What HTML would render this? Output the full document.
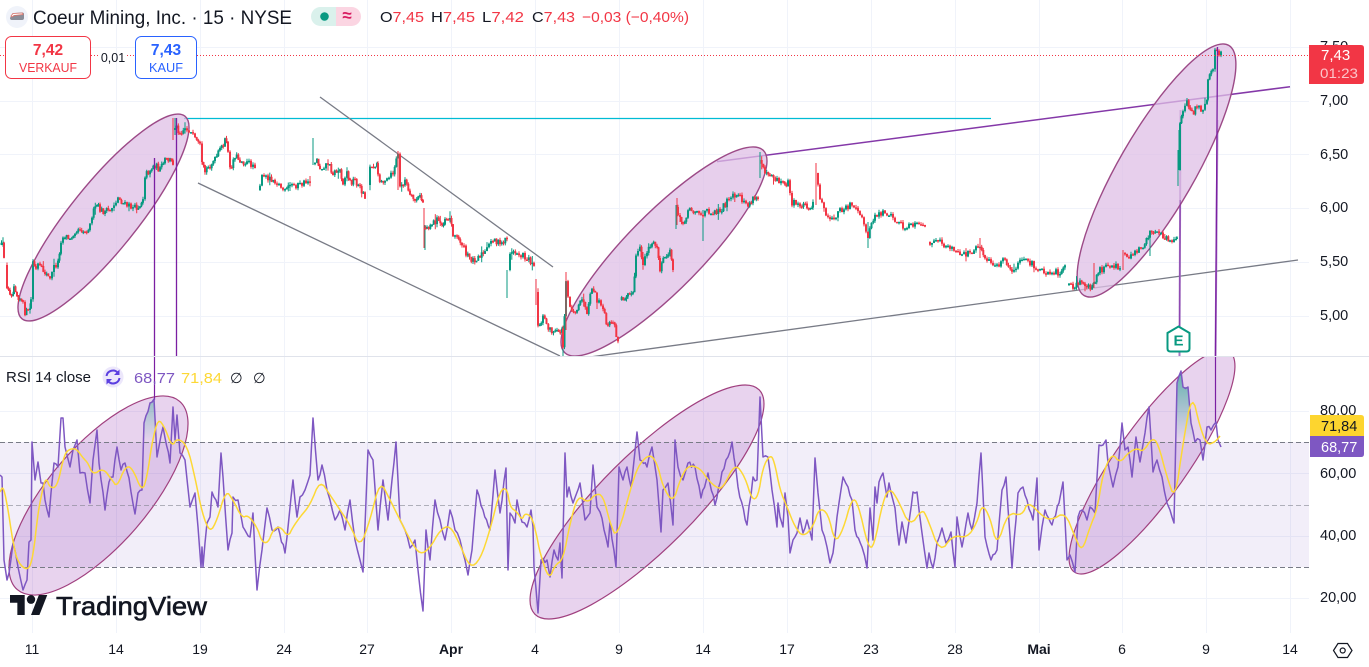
<!DOCTYPE html>
<html><head><meta charset="utf-8"><style>
html,body{margin:0;padding:0;background:#fff;width:1369px;height:667px;overflow:hidden}
svg{display:block}
text{font-family:"Liberation Sans",sans-serif;fill:#131722}
.a{font-size:14.5px}
.t{font-size:14px;text-anchor:middle}
</style></head><body>
<svg id="s" width="1369" height="667" viewBox="0 0 1369 667" xmlns="http://www.w3.org/2000/svg">
<defs>
<clipPath id="p1"><rect x="0" y="0" width="1309" height="356"/></clipPath>
<clipPath id="p2"><rect x="0" y="357" width="1309" height="276"/></clipPath>
<linearGradient id="g" x1="0" y1="0" x2="0" y2="1"><stop offset="0" stop-color="#089981" stop-opacity=".6"/><stop offset="1" stop-color="#089981" stop-opacity="0"/></linearGradient>
</defs>
<rect width="1369" height="667" fill="#fff"/>
<!-- grid -->
<path d="M32.5 0V633M116.5 0V633M200.5 0V633M284.5 0V633M367.5 0V633M451.5 0V633M535.5 0V633M619.5 0V633M703.5 0V633M787.5 0V633M871.5 0V633M955.5 0V633M1039.5 0V633M1122.5 0V633M1206.5 0V633M1290.5 0V633" stroke="#f0f3fa" fill="none"/>
<path d="M0 47.5H1309M0 101.5H1309M0 154.5H1309M0 208.5H1309M0 262.5H1309M0 316.5H1309M0 411.5H1309M0 473.5H1309M0 536.5H1309M0 598.5H1309" stroke="#f0f3fa" fill="none"/>
<rect x="0" y="356" width="1369" height="1" fill="#e0e3eb"/>
<!-- RSI band -->
<rect x="0" y="442" width="1309" height="125" fill="#7e57c2" fill-opacity=".1"/>
<!-- trend lines -->
<g clip-path="url(#p1)" fill="none">
<path d="M184 118.5H991" stroke="#00bcd4" stroke-width="1.2"/>
<path d="M320 97L553 267M198 183L560 356M590 357L1298 260" stroke="#787b86" stroke-width="1.3"/>
<path d="M717 161.6L1290 86.7" stroke="#8438a8" stroke-width="1.5"/>
<path d="M1180.5 110L1179.5 356" stroke="#a678c4" stroke-width="2"/>
<path d="M1217.500 120L1215.500 356" stroke="#b48ccd" stroke-width="2"/>
<g fill="#dfbfe6" fill-opacity=".75" stroke="#9c4a87" stroke-width="1.4">
<ellipse cx="103.5" cy="217.5" rx="130" ry="33.4" transform="rotate(-51.2 103.5 217.5)"/>
<ellipse cx="664" cy="251.5" rx="141.7" ry="38.2" transform="rotate(-45.5 664 251.5)"/>
<ellipse cx="1156.5" cy="170.5" rx="144.5" ry="38" transform="rotate(-60 1156.5 170.5)"/>
</g>
<path id="cw" stroke-width="1"/><path id="cr" stroke-width="1"/>
<path d="M154.5 158V356M176.5 118V356M1217.5 47L1215.5 356" stroke="#7b1fa2" stroke-width="1.3"/>
<path d="M1180.2 200L1179.5 326" stroke="#7b1fa2" stroke-opacity=".6" stroke-width="1"/>
</g>
<!-- price line -->
<path d="M0 55.5H5M91 55.5H100M127 55.5H135M197 55.5H1309" stroke="#f23645" stroke-dasharray="1 2" fill="none"/>
<!-- E marker -->
<path d="M1178.5 326.5L1189.500 333V348.500Q1189.500 351.500 1186.500 351.500H1170.500Q1167.500 351.500 1167.500 348.500V333Z" fill="#fff" stroke="#089981" stroke-width="2"/>
<text x="1178.5" y="345.500" text-anchor="middle" font-size="15" font-weight="700" style="fill:#089981">E</text>
<!-- RSI -->
<g clip-path="url(#p2)" fill="none">
<ellipse cx="98.5" cy="495.5" rx="124.3" ry="49.7" transform="rotate(-49.2 98.5 495.5)" fill="#8e24aa" fill-opacity=".2" stroke="#a0407f" stroke-width="1.2"/>
<ellipse cx="647" cy="502" rx="158.6" ry="47" transform="rotate(-45 647 502)" fill="#8e24aa" fill-opacity=".2" stroke="#a0407f" stroke-width="1.2"/>
<ellipse cx="1152" cy="462" rx="134.7" ry="35.7" transform="rotate(-54.8 1152 462)" fill="#8e24aa" fill-opacity=".2" stroke="#a0407f" stroke-width="1.2"/>
<path d="M0 442.5H1309M0 567.5H1309" stroke="#787b86" stroke-dasharray="5 3"/>
<path d="M0 505.5H1309" stroke="#787b86" stroke-opacity=".55" stroke-dasharray="5 3"/>
<path d="M144 423L150 403L154 399L157 442H144ZM1177 383L1181 371L1183 387L1188 387L1191 423L1194 442H1177Z" fill="url(#g)"/>
<path d="M154.5 357V400M1215.5 357V422" stroke="#7b1fa2" stroke-width="1.2"/>
<polyline id="rp" stroke="#7e57c2" stroke-width="1.5" stroke-linejoin="round" points="0,475 2,477 4,560 7,580 9,573 13,543 18,567 23,590 27,580 29,542 31,540 32,442 35,480 38,462 41,483 43,483 45,500 49,517 51,493 54,463 58,467 61,418 63,418 65,447 70,467 73,450 77,440 80,473 85,473 90,503 93,460 97,430 99,463 105,510 109,482 113,477 117,447 121,470 125,463 129,478 135,514 138,493 142,490 144,423 150,403 154,399 157,457 163,427 170,463 173,407 175,440 177,415 180,453 185,460 190,507 195,493 198,527 201,567 202,547 203,567 207,523 210,517 212,492 218,507 221,453 223,477 228,550 232,533 233,497 238,500 243,527 250,537 253,513 257,590 262,550 267,508 272,530 278,527 285,553 287,537 293,480 297,517 300,497 305,490 310,475 313,418 318,480 322,465 327,490 330,500 335,520 340,510 345,530 350,500 355,540 360,560 363,572 368,450 373,460 378,530 383,480 388,520 392,480 396,442 400,520 405,530 410,548 415,540 418,570 423,611 426,530 430,560 435,500 440,520 445,540 450,510 455,530 460,540 465,560 468,575 472,550 477,490 483,510 490,530 495,470 500,513 506,468 508,570 510,513 515,523 517,500 522,522 527,527 531,510 533,527 534,567 538,613 541,560 547,560 550,577 554,550 558,560 560,543 562,578 565,453 567,497 569,487 573,503 580,483 585,520 590,513 593,465 597,507 600,512 608,547 610,522 616,567 619,467 623,480 627,467 631,487 637,432 640,460 647,467 652,447 657,480 661,532 663,490 668,483 673,525 675,440 678,467 683,480 688,463 695,467 701,498 708,473 715,505 722,472 728,457 732,442 738,487 747,525 753,477 757,480 760,397 763,457 768,457 772,490 777,527 778,503 780,517 783,527 785,493 788,517 790,553 793,540 797,533 800,518 803,533 807,520 812,540 815,458 818,493 822,530 827,547 830,563 833,553 837,517 839,503 843,477 848,487 852,500 855,530 862,547 867,568 870,508 873,540 875,487 877,503 879,482 883,473 887,497 889,483 895,508 899,545 902,522 906,543 913,492 917,492 922,533 927,568 929,553 933,568 937,543 942,528 946,543 951,532 955,567 957,517 962,547 968,513 972,530 977,503 981,453 985,537 991,560 997,550 1002,490 1006,477 1012,568 1018,493 1023,487 1027,500 1033,520 1037,478 1039,550 1042,527 1045,510 1052,525 1059,503 1063,482 1067,560 1070,555 1075,572 1078,517 1082,510 1087,520 1090,507 1095,513 1099,445 1103,445 1106,440 1108,463 1113,487 1118,467 1122,423 1125,450 1128,447 1132,477 1136,437 1140,462 1145,433 1149,407 1153,472 1157,460 1162,477 1167,503 1170,510 1174,523 1177,383 1181,371 1183,387 1188,387 1191,423 1195,442 1200,440 1203,460 1207,427 1211,430 1216,422 1218,440 1221,447"/>
<polyline id="ry" stroke="#fdd835" stroke-width="1.5" stroke-linejoin="round" points="0,492 3,486 7,503 13,543 18,563 28,571 33,557 38,513 42,492 46,477 50,488 57,487 63,460 67,450 76,448 83,458 88,463 93,475 103,468 112,480 117,487 125,467 132,467 142,492 147,477 152,443 158,418 165,428 172,447 177,438 187,445 195,477 202,513 210,533 217,520 226,490 233,500 242,518 248,515 257,527 262,542 268,543 273,530 280,526 288,537 293,527 300,517 310,505 320,480 330,495 340,510 350,525 360,548 370,520 380,480 390,500 400,520 410,540 420,555 430,548 440,530 450,525 460,545 470,568 480,560 490,530 500,490 507,488 510,507 517,512 522,520 525,513 532,517 537,537 540,553 549,580 555,565 563,560 570,523 578,495 588,503 595,494 603,495 610,523 617,539 633,480 640,463 650,454 657,463 663,487 673,503 680,480 688,465 700,468 708,480 717,488 723,488 735,463 745,477 752,500 758,497 763,467 770,455 774,460 780,490 787,507 795,527 803,537 813,527 819,508 828,513 835,543 843,530 852,498 858,503 868,547 874,547 883,500 890,488 898,500 910,527 922,509 927,517 940,553 953,535 967,538 977,523 982,504 990,517 997,547 1008,512 1022,516 1028,501 1043,517 1052,520 1065,512 1075,537 1082,552 1090,527 1097,510 1103,473 1112,453 1120,463 1128,453 1137,448 1143,452 1152,438 1158,443 1167,477 1175,500 1183,443 1192,393 1200,427 1207,445 1215,442 1220,436"/>
</g>
<!-- header -->
<circle cx="17" cy="17" r="11" fill="#f0f3fa"/>
<path d="M10 18L12 14Q12.5 13 14 13L22 12.5Q24 12.5 24 14L24 18Q24 20 22 20H12Q10 20 10 18Z" fill="#8a8d98"/>
<path d="M11 16L13 13.5L22.5 13L23 14.5L14 15.5L12 17Z" fill="#fff" stroke="#d9736a" stroke-width=".8"/>
<text x="33" y="24" font-size="19" textLength="259" lengthAdjust="spacingAndGlyphs">Coeur Mining, Inc. · 15 · NYSE</text>
<path d="M336 7H320.5A9.5 9.5 0 0 0 320.5 26H336Z" fill="#daf1ec"/>
<path d="M336 7H351.500A9.500 9.500 0 0 1 351.500 26H336Z" fill="#fbd5e2"/>
<circle cx="324.500" cy="16.500" r="4.300" fill="#089981"/>
<text x="347" y="21" text-anchor="middle" font-size="17" font-weight="700" style="fill:#d81b60">≈</text>
<g font-size="15">
<text x="380" y="22" textLength="44" lengthAdjust="spacingAndGlyphs">O<tspan style="fill:#f23645">7,45</tspan></text>
<text x="431" y="22" textLength="44" lengthAdjust="spacingAndGlyphs">H<tspan style="fill:#f23645">7,45</tspan></text>
<text x="482" y="22" textLength="42" lengthAdjust="spacingAndGlyphs">L<tspan style="fill:#f23645">7,42</tspan></text>
<text x="532" y="22" textLength="43" lengthAdjust="spacingAndGlyphs">C<tspan style="fill:#f23645">7,43</tspan></text>
<text x="582" y="22" textLength="107" lengthAdjust="spacingAndGlyphs" style="fill:#f23645">−0,03 (−0,40%)</text>
</g>
<!-- buy sell -->
<rect x="5.500" y="36.500" width="85" height="42" rx="6" fill="#fff" stroke="#f23645"/>
<rect x="135.500" y="36.500" width="61" height="42" rx="6" fill="#fff" stroke="#2962ff"/>
<text x="48" y="55" text-anchor="middle" font-size="15.500" font-weight="700" style="fill:#f23645">7,42</text>
<text x="48" y="72" text-anchor="middle" font-size="13" textLength="58" lengthAdjust="spacingAndGlyphs" style="fill:#f23645">VERKAUF</text>
<text x="166" y="55" text-anchor="middle" font-size="15.500" font-weight="700" style="fill:#2962ff">7,43</text>
<text x="166" y="72" text-anchor="middle" font-size="13" textLength="34" lengthAdjust="spacingAndGlyphs" style="fill:#2962ff">KAUF</text>
<text x="113" y="62" text-anchor="middle" font-size="12.500">0,01</text>
<!-- axis -->
<text class="a" x="1320" y="51">7,50</text>
<text class="a" x="1320" y="105">7,00</text>
<text class="a" x="1320" y="159">6,50</text>
<text class="a" x="1320" y="212">6,00</text>
<text class="a" x="1320" y="266">5,50</text>
<text class="a" x="1320" y="320">5,00</text>
<path d="M1309 45H1361Q1364 45 1364 48V81Q1364 84 1361 84H1309Z" fill="#f23645"/>
<text x="1321" y="60" font-size="15" style="fill:#fff">7,43</text>
<text x="1320" y="78" font-size="14" textLength="38" lengthAdjust="spacingAndGlyphs" style="fill:#fbc5ca">01:23</text>
<text class="a" x="1320" y="415">80,00</text>
<text class="a" x="1320" y="478">60,00</text>
<text class="a" x="1320" y="540">40,00</text>
<text class="a" x="1320" y="602">20,00</text>
<path d="M1310 415H1361Q1364 415 1364 418V436H1310Z" fill="#fdd52f"/>
<path d="M1310 436H1364V454Q1364 457 1361 457H1310Z" fill="#7e57c2"/>
<text x="1321" y="431" font-size="14.500">71,84</text>
<text x="1321" y="452" font-size="14.500" style="fill:#fff">68,77</text>
<text class="t" x="32" y="654">11</text><text class="t" x="116" y="654">14</text><text class="t" x="200" y="654">19</text><text class="t" x="284" y="654">24</text><text class="t" x="367" y="654">27</text><text class="t" x="451" y="654" font-weight="700">Apr</text><text class="t" x="535" y="654">4</text><text class="t" x="619" y="654">9</text><text class="t" x="703" y="654">14</text><text class="t" x="787" y="654">17</text><text class="t" x="871" y="654">23</text><text class="t" x="955" y="654">28</text><text class="t" x="1039" y="654" font-weight="700">Mai</text><text class="t" x="1122" y="654">6</text><text class="t" x="1206" y="654">9</text><text class="t" x="1290" y="654">14</text>
<path d="M1333.500 650.500L1338 643.500H1347.500L1352 650.500L1347.500 657.500H1338Z" fill="none" stroke="#131722" stroke-width="1.200"/>
<circle cx="1342.700" cy="650.500" r="2.500" fill="none" stroke="#131722" stroke-width="1.200"/>
<!-- legend -->
<text x="6" y="382" font-size="14.500" textLength="85" lengthAdjust="spacingAndGlyphs">RSI 14 close</text>
<circle cx="113" cy="377" r="10.500" fill="#ece7fb"/>
<path d="M106.500 376A6.500 6.500 0 0 1 118 373M119.500 378A6.500 6.500 0 0 1 108 381" fill="none" stroke="#5b3fe0" stroke-width="2"/>
<path d="M119.500 369.500V375H114ZM106.500 384.500V379H112Z" fill="#5b3fe0"/>
<text x="134" y="383" font-size="14.500" textLength="41" lengthAdjust="spacingAndGlyphs" style="fill:#7e57c2">68,77</text>
<text x="181" y="383" font-size="14.500" textLength="41" lengthAdjust="spacingAndGlyphs" style="fill:#fdd835">71,84</text>
<text x="230" y="383" font-size="14.500">∅</text>
<text x="253" y="383" font-size="14.500">∅</text>
<!-- logo -->
<g transform="translate(10 590.600) scale(1.050 1.110)" fill="#131722"><path d="M14 22H7V11H0V4h14v18zM28 22h-8l7.500-18h8L28 22z"/><circle cx="20" cy="8" r="4"/></g>
<text x="56" y="615" font-size="26" textLength="151" lengthAdjust="spacingAndGlyphs" style="fill:#131722;stroke:#131722;stroke-width:.6">TradingView</text>
</svg>
<script>
var S=[
[0,245,3,246,4,255],
[5,265,7,290,10,292,13,294,14,283,17,295,20,298,23,305,25,312,28,312,30,308,31,300,33,262,36,270,38,265,40,268,45,272,50,280,52,270,58,262,61,240,65,235,70,240,75,230,80,228,85,232,90,225,92,215,97,205,100,210,105,212,110,210,118,198,125,205,135,208,140,205,143,197,145,175,150,170,155,165,160,170,165,160,170,160,173,163],
[173,130,175,125,180,132,185,128,189,130,195,140,200,147,202,165,205,172,210,165,215,160,220,150,225,140,228,150,230,160,230,170,235,155,240,160,247,163,255,165],
[258,190,262,178,268,177,275,180,285,192,290,185,300,185,310,180],
[313,163,317,160,320,168,328,163,333,173,340,170,343,182,347,172,350,182,355,180,360,188,365,196],
[368,185,370,167,377,163,378,177,385,183,393,173,398,153,400,188,405,180,410,197,415,200,420,197,423,202],
[424,228,427,227,432,223,437,220,442,225,445,218,450,218,453,233,457,238,462,243,466,255,473,260,480,255,485,253,493,238,500,245,507,237],
[508,270,510,253,517,253,527,258,534,263],
[536,292,538,327,543,317,550,330,557,333,562,330,563,347,566,280,570,307,577,313,582,297,587,317,592,287,597,300,603,310,608,327,613,320,618,343],
[620,300,625,297,628,290,633,295,636,257,640,250,643,263,647,250,652,243,657,247,660,270,665,257,670,253,673,267],
[676,207,680,220,683,223,688,210,697,210,703,217,707,210,713,212,720,210,727,202,733,197,740,198,748,205,753,200,758,198],
[760,160,765,170,770,173,777,180,783,183,788,183,792,203,800,205,807,205,812,208,813,205],
[816,173,820,200,830,222,840,210,850,205,860,215,868,235,875,215,885,212,895,220,905,228,915,225,925,228],
[928,242,940,243,950,247,960,256,970,252,980,245,985,258,995,267,1005,260,1012,275,1018,262,1030,262,1040,270,1050,272,1060,272,1065,268],
[1067,285,1073,288,1080,283,1085,285,1092,287,1095,280,1100,270,1110,267,1120,267],
[1123,253,1127,257,1137,250,1143,245,1150,233,1157,233,1163,237,1170,240,1176,242,1177,235],
[1178,170,1180,123,1183,110,1187,100,1192,113,1197,107,1203,112,1207,97,1208,80,1213,67,1215,52,1219,55,1221,53]
];
var q=12345;function R(){q=q*16807%2147483647;return q/2147483647}
var G="",D="";
function f(v){return v.toFixed(1)}
S.forEach(function(a){
 var o=a[1];
 for(var i=0;i<a.length-2;i+=2){
  var x0=a[i],y0=a[i+1],x1=a[i+2],y1=a[i+3],n=Math.max(1,Math.round((x1-x0)/2));
  for(var k=1;k<=n;k++){
   var x=x0+(x1-x0)*k/n,y=y0+(y1-y0)*k/n,c=y+(R()-.5)*7;
   var e=R()<.08?7:2.5,t=Math.min(o,c)-R()*e,b=Math.max(o,c)+R()*e,m=Math.min(o,c),h=Math.max(o,c,m+1.5);
   var w="M"+f(x)+" "+f(t)+"V"+f(b)+"M"+f(x-.5)+" "+f(m)+"V"+f(h)+"M"+f(x+.5)+" "+f(m)+"V"+f(h);
   if(c<=o)G+=w;else D+=w;
   o=c;
  }
 }
});
/* long wicks seen in the reference: x, top, bottom, green? */
[[33,260,285,1],[173,118,140,0],[175,118,135,1],[313,138,165,1],[398,151,190,0],[424,208,248,0],[425,225,250,1],[507,270,298,1],[536,279,305,0],[566,272,330,0],[563,330,356,1],[676,205,229,1],[677,198,225,0],[703,210,241,1],[760,152,178,1],[816,163,205,0],[868,222,248,1],[980,238,258,0],[1094,263,288,0],[1150,230,256,1],[1178,150,186,1],[1179,130,170,1],[1215,48,66,1],[1123,250,270,0]].forEach(function(w){
 var p="M"+w[0]+" "+w[1]+"V"+w[2];if(w[3])G+=p;else D+=p;
});
var g=document.getElementById("cw"),r=document.getElementById("cr");
g.setAttribute("d",G);g.setAttribute("stroke","#089981");
r.setAttribute("d",D);r.setAttribute("stroke","#f23645");
function pts(el){return el.getAttribute("points").trim().split(/\s+/).map(function(s){return s.split(",").map(Number)})}
/* roughen the RSI line between traced anchors */
var P=pts(document.getElementById("rp")),O=[];
P.forEach(function(p,i){
 if(i){var a=P[i-1],d=p[0]-a[0],n=Math.floor(d/1.7);
  for(var k=1;k<n;k++){var u=k/n;O.push([a[0]+d*u,a[1]+(p[1]-a[1])*u+(R()-.5)*5])}}
 O.push(p);
});
document.getElementById("rp").setAttribute("points",O.map(function(p){return f(p[0])+","+f(p[1])}).join(" "));
/* smooth the moving average */
var Y=pts(document.getElementById("ry"));
for(var it=0;it<2;it++){var N=[Y[0]];
 for(var i=0;i<Y.length-1;i++){var a=Y[i],b=Y[i+1];
  N.push([a[0]*.75+b[0]*.25,a[1]*.75+b[1]*.25],[a[0]*.25+b[0]*.75,a[1]*.25+b[1]*.75])}
 N.push(Y[Y.length-1]);Y=N}
document.getElementById("ry").setAttribute("points",Y.map(function(p){return f(p[0])+","+f(p[1])}).join(" "));
</script>
</body></html>
